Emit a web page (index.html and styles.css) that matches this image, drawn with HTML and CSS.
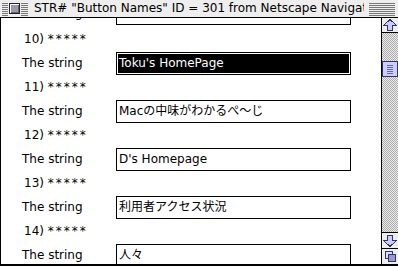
FILE: index.html
```html
<!DOCTYPE html>
<html>
<head>
<meta charset="utf-8">
<link rel="stylesheet" href="styles.css">
</head>
<body>
<div class="window">
  <div class="titlebar">
    <span class="stripes s-left"></span>
    <span class="closebox"></span>
    <span class="stripes s-mid"></span>
    <span class="title">STR# "Button Names" ID = 301 from Netscape Navigat</span>
    <span class="stripes s-right"></span>
  </div>
  <div class="body">
    <div class="content">
      <div class="list">
        <div class="strrow first"><span class="label">The string</span><div class="field">ホーム</div></div>
        <div class="hdr">10) <span class="stars">*****</span></div>
        <div class="strrow"><span class="label">The string</span><div class="field sel">Toku's HomePage</div></div>
        <div class="hdr">11) <span class="stars">*****</span></div>
        <div class="strrow"><span class="label">The string</span><div class="field">Macの中味がわかるぺ〜じ</div></div>
        <div class="hdr">12) <span class="stars">*****</span></div>
        <div class="strrow"><span class="label">The string</span><div class="field">D's Homepage</div></div>
        <div class="hdr">13) <span class="stars">*****</span></div>
        <div class="strrow"><span class="label">The string</span><div class="field">利用者アクセス状況</div></div>
        <div class="hdr">14) <span class="stars">*****</span></div>
        <div class="strrow"><span class="label">The string</span><div class="field">人々</div></div>
      </div>
    </div>
    <div class="scrollbar">
      <div class="arrow up">
        <svg width="16" height="14" viewBox="0 0 16 14"><path d="M8 1.5 L14.5 7.5 L10.5 7.5 L10.5 12.5 L5.5 12.5 L5.5 7.5 L1.5 7.5 Z" fill="#ccccff" stroke="#333366" stroke-width="1" shape-rendering="crispEdges"/></svg>
      </div>
      <div class="track"><div class="thumb"><span class="grip"></span></div></div>
      <div class="arrow down">
        <svg width="16" height="15" viewBox="0 0 16 15"><path d="M8 13.5 L14.5 7.5 L10.5 7.5 L10.5 2.5 L5.5 2.5 L5.5 7.5 L1.5 7.5 Z" fill="#ccccff" stroke="#333366" stroke-width="1" shape-rendering="crispEdges"/></svg>
      </div>
      <div class="grow">
        <svg width="16" height="15" viewBox="0 0 16 15"><rect x="3.5" y="2.5" width="7" height="7" fill="#ddddff" stroke="#333366"/><rect x="6.5" y="5.5" width="7" height="7" fill="#9999cc" stroke="#333366"/></svg>
      </div>
    </div>
  </div>
</div>
</body>
</html>
```

FILE: styles.css
```css
html, body {
  margin: 0;
  padding: 0;
}
body {
  width: 398px;
  height: 266px;
  overflow: hidden;
  background: #fff;
  font-family: "DejaVu Sans", "Noto Sans CJK JP", sans-serif;
  font-size: 12px;
  color: #000;
}
.window {
  width: 398px;
  height: 266px;
  display: flex;
  flex-direction: column;
  background: #fff;
}
.titlebar {
  height: 17px;
  flex: 0 0 17px;
  border-bottom: 1px solid #000;
  background: #eeeeee;
  display: flex;
  align-items: flex-start;
  position: relative;
  z-index: 1;
}
.stripes {
  height: 13px;
  margin-top: 3px;
  background: repeating-linear-gradient(to bottom, #777 0 1px, transparent 1px 2px);
}
.s-left { width: 6px; margin-left: 2px; }
.closebox {
  width: 9px;
  height: 9px;
  margin: 3px 1px 0 1px;
  border: 1px solid #222;
  background: #9a9aae;
  box-shadow: inset 1px 1px 0 #fff, inset -1px -1px 0 #666;
}
.s-mid { width: 7px; }
.title {
  width: 330px;
  margin: 0 5px 0 6px;
  white-space: nowrap;
  overflow: hidden;
  line-height: 17px;
  font-size: 12px;
}
.s-right { width: 26px; }
.body {
  flex: 1;
  display: flex;
  border-left: 1px solid #000;
  border-bottom: 2px solid #000;
  min-height: 0;
}
.content {
  flex: 1;
  overflow: hidden;
}
.list {
  display: flex;
  flex-direction: column;
  padding-left: 21px;
}
.strrow {
  display: flex;
  height: 23px;
  align-items: stretch;
}
.strrow.first {
  margin-top: -16px;
  margin-bottom: 2px;
}
.label {
  width: 94px;
  line-height: 23px;
}
.field {
  border: 1px solid #000;
  line-height: 21px;
  padding-left: 2px;
  box-sizing: border-box;
  width: 235px;
  white-space: nowrap;
  overflow: hidden;
}
.field.sel {
  background: #000;
  color: #fff;
  box-shadow: inset 0 0 0 1px #fff;
}
.hdr {
  height: 25px;
  line-height: 24px;
  padding-left: 2px;
}
.stars {
  letter-spacing: 2px;
}
.scrollbar {
  width: 16px;
  border-left: 1px solid #000;
  display: flex;
  flex-direction: column;
}
.arrow {
  background: #eeeeee;
  display: flex;
}
.arrow.up {
  height: 14px;
  border-bottom: 1px solid #000;
}
.arrow.down {
  height: 15px;
  border-top: 1px solid #000;
  border-bottom: 1px solid #000;
}
.grow {
  height: 15px;
  background: #eeeeee;
  display: flex;
}
.track {
  flex: 1;
  background: repeating-conic-gradient(#aaaaaa 0 25%, #eeeeee 0 50%) 0 0 / 2px 2px;
  overflow: hidden;
}
.thumb {
  margin-top: 28px;
  height: 14px;
  width: 14px;
  border: 1px solid #333366;
  background: #ccccff;
  display: flex;
  justify-content: center;
  align-items: center;
}
.grip {
  width: 6px;
  height: 9px;
  background: repeating-linear-gradient(to bottom, #6666aa 0 1px, transparent 1px 2px);
}
```
